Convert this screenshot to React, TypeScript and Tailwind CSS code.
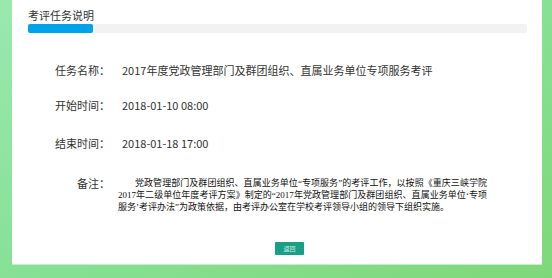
const FONT = { fontFamily: '"Microsoft YaHei", "Noto Sans CJK SC", "Liberation Sans", sans-serif' };
const SERIF = { fontFamily: '"Liberation Serif", "Noto Sans CJK SC", serif' };

const ROWS = [
  { label: "任务名称：", value: "2017年度党政管理部门及群团组织、直属业务单位专项服务考评", mt: "mt-[29px]" },
  { label: "开始时间：", value: "2018-01-10 08:00", mt: "mt-[19px]" },
  { label: "结束时间：", value: "2018-01-18 17:00", mt: "mt-[22px]" },
];

export default function App() {
  return (
    <div
      className="w-[552px] h-[278px] bg-gradient-to-br from-[#9ae8ae] via-[#86e196] to-[#7fd878] pl-[12px] pr-[10px] pb-[13px]"
      style={FONT}
    >
      <div className="h-full bg-white border-b border-[#c9eccb] flex flex-col pt-[8px]">
        <div className="pl-[16px] pr-[15px]">
          <div className="text-[11px] leading-[14px] text-[#333]">考评任务说明</div>
          <div className="mt-[2px] h-[9px] bg-[#f2f2f2] rounded-[2px]">
            <div className="h-full w-[65px] bg-[#00a3ea] rounded-[2px]" />
          </div>
        </div>

        {ROWS.map((row) => (
          <div key={row.label} className={`flex items-center ${row.mt} text-[11px] leading-[16px] text-[#333]`}>
            <div className="w-[98px] text-right">{row.label}</div>
            <div className="ml-[12px]">{row.value}</div>
          </div>
        ))}

        <div className="flex mt-[26px] text-[#333]">
          <div className="w-[98px] text-right text-[11px] leading-[12px]">备注：</div>
          <p
            className="ml-[8px] w-[369px] text-[9px] leading-[12px] indent-[17px] text-justify text-[#111]"
            style={SERIF}
          >
            党政管理部门及群团组织、直属业务单位“专项服务”的考评工作，以按照《重庆三峡学院2017年二级单位年度考评方案》制定的“2017年党政管理部门及群团组织、直属业务单位‘专项服务’考评办法”为政策依据，由考评办公室在学校考评领导小组的领导下组织实施。
          </p>
        </div>

        <div className="mt-[29px] flex justify-center">
          <button className="ml-[25px] w-[29px] h-[13px] bg-[#1a9e86] text-[6px] leading-[13px] text-[#cfeee8] rounded-[1px]">
            返回
          </button>
        </div>
      </div>
    </div>
  );
}
